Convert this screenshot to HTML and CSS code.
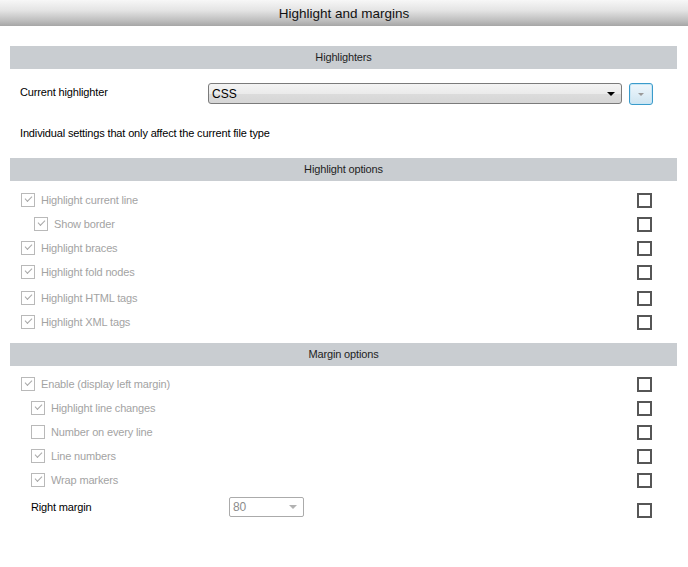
FILE: index.html
```html
<!DOCTYPE html>
<html>
<head>
<meta charset="utf-8">
<link rel="stylesheet" href="styles.css">
</head>
<body>
<div class="titlebar">Highlight and margins</div>
<div class="content">
  <div class="section-head">Highlighters</div>
  <div class="hl-row">
    <span class="label">Current highlighter</span>
    <div class="select"><span class="sel-text">CSS</span><span class="arrow-black"></span></div>
    <div class="drop-btn"><span class="arrow-gray"></span></div>
  </div>
  <div class="note">Individual settings that only affect the current file type</div>

  <div class="section-head">Highlight options</div>
  <div class="opts">
    <div class="opt"><label class="chk lvl1"><span class="box on"></span>Highlight current line</label><span class="rbox"></span></div>
    <div class="opt"><label class="chk lvl2"><span class="box on"></span>Show border</label><span class="rbox"></span></div>
    <div class="opt"><label class="chk lvl1"><span class="box on"></span>Highlight braces</label><span class="rbox"></span></div>
    <div class="opt"><label class="chk lvl1"><span class="box on"></span>Highlight fold nodes</label><span class="rbox"></span></div>
    <div class="opt tall"><label class="chk lvl1"><span class="box on"></span>Highlight HTML tags</label><span class="rbox"></span></div>
    <div class="opt"><label class="chk lvl1"><span class="box on"></span>Highlight XML tags</label><span class="rbox"></span></div>
  </div>

  <div class="section-head">Margin options</div>
  <div class="opts margin-opts">
    <div class="opt"><label class="chk lvl1"><span class="box on"></span>Enable (display left margin)</label><span class="rbox"></span></div>
    <div class="opt"><label class="chk lvlm"><span class="box on"></span>Highlight line changes</label><span class="rbox"></span></div>
    <div class="opt"><label class="chk lvlm"><span class="box"></span>Number on every line</label><span class="rbox"></span></div>
    <div class="opt"><label class="chk lvlm"><span class="box on"></span>Line numbers</label><span class="rbox"></span></div>
    <div class="opt"><label class="chk lvlm"><span class="box on"></span>Wrap markers</label><span class="rbox"></span></div>
    <div class="rm-row">
      <div class="rm-left"><span class="rm-label">Right margin</span><div class="combo"><span>80</span><span class="arrow-light"></span></div></div>
      <span class="rbox rm-box"></span>
    </div>
  </div>
</div>
</body>
</html>
```

FILE: styles.css
```css
html, body {
  margin: 0;
  padding: 0;
  background: #ffffff;
  font-family: "Liberation Sans", Arial, sans-serif;
  font-size: 11px;
  letter-spacing: -0.15px;
  color: #000;
}

.titlebar {
  height: 26px;
  line-height: 28px;
  text-align: center;
  font-size: 13.5px;
  letter-spacing: 0;
  color: #111;
  background: linear-gradient(to bottom, #f7f7f7 0%, #e4e4e4 40%, #bdbdbd 80%, #a6a6a6 100%);
}

.content {
  padding: 20px 11px 0 10px;
}

.section-head {
  height: 23px;
  line-height: 23px;
  background: #c9cdd1;
  text-align: center;
  color: #1e1e1e;
}

.hl-row {
  display: flex;
  align-items: center;
  margin-top: 14px;
  height: 22px;
}

.hl-row .label {
  width: 198px;
  box-sizing: border-box;
  padding-left: 10px;
  position: relative;
  top: -2px;
}

.select {
  width: 414px;
  height: 21px;
  box-sizing: border-box;
  border: 1px solid #7b7b7b;
  border-radius: 3px;
  background: linear-gradient(to bottom, #f4f4f4 0%, #ebebeb 50%, #dcdcdc 51%, #d6d6d6 100%);
  display: flex;
  align-items: center;
  justify-content: space-between;
  padding: 0 6px 0 3px;
  margin-top: -1px;
  font-size: 12px;
  letter-spacing: 0;
}

.sel-text { padding-top: 1px; }

.arrow-black {
  width: 0;
  height: 0;
  border-left: 4px solid transparent;
  border-right: 4px solid transparent;
  border-top: 4px solid #000;
}

.drop-btn {
  margin-left: 7px;
  width: 24px;
  height: 22px;
  box-sizing: border-box;
  border: 1px solid #3a9bcb;
  border-radius: 3px;
  background: linear-gradient(to bottom, #eef6fb 0%, #dfeef7 50%, #cfe4f0 100%);
  box-shadow: inset 0 0 0 1px #c8e6f5;
  display: flex;
  align-items: center;
  justify-content: center;
}

.arrow-gray {
  width: 0;
  height: 0;
  border-left: 3px solid transparent;
  border-right: 3px solid transparent;
  border-top: 3px solid #9a9a9a;
}

.note {
  margin-top: 21px;
  padding-left: 10px;
  height: 14px;
  line-height: 14px;
  margin-bottom: 18px;
}

.opts {
  padding-top: 7px;
  padding-bottom: 9px;
}

.opt {
  display: flex;
  align-items: center;
  justify-content: space-between;
  height: 24px;
}

.opt.tall {
  height: 26px;
  padding-top: 2px;
  box-sizing: border-box;
}

.chk {
  display: flex;
  align-items: center;
  color: #a3a3a3;
}

.lvl1 { padding-left: 11px; }
.lvl2 { padding-left: 24px; }
.lvlm { padding-left: 21px; }

.box {
  width: 12px;
  height: 12px;
  border: 1px solid #b9b9b9;
  background: #fff;
  margin-right: 6px;
  position: relative;
  flex: none;
}

.box.on::after {
  content: "";
  position: absolute;
  left: 3px;
  top: 2px;
  width: 6px;
  height: 3px;
  border-left: 1px solid #a8a8a8;
  border-bottom: 1px solid #a8a8a8;
  transform: rotate(-45deg);
}

.rbox {
  width: 11px;
  height: 11px;
  border: 2px solid #565656;
  background: #fff;
  margin-right: 25px;
  flex: none;
}

.margin-opts {
  padding-top: 6px;
}

.rm-row {
  display: flex;
  justify-content: space-between;
  align-items: flex-start;
  padding-top: 5px;
}

.rm-left {
  display: flex;
  align-items: center;
  padding-left: 21px;
}

.rm-label {
  width: 198px;
  color: #000;
  position: relative;
  top: 0;
}

.combo {
  width: 75px;
  height: 20px;
  box-sizing: border-box;
  border: 1px solid #ababab;
  border-radius: 2px;
  background: #fff;
  display: flex;
  align-items: center;
  justify-content: space-between;
  padding: 0 6px 0 3px;
  color: #8c8c8c;
  font-size: 12px;
}

.arrow-light {
  width: 0;
  height: 0;
  border-left: 4px solid transparent;
  border-right: 4px solid transparent;
  border-top: 4px solid #b2b2b2;
}

.rm-box {
  margin-top: 6px;
}
```
